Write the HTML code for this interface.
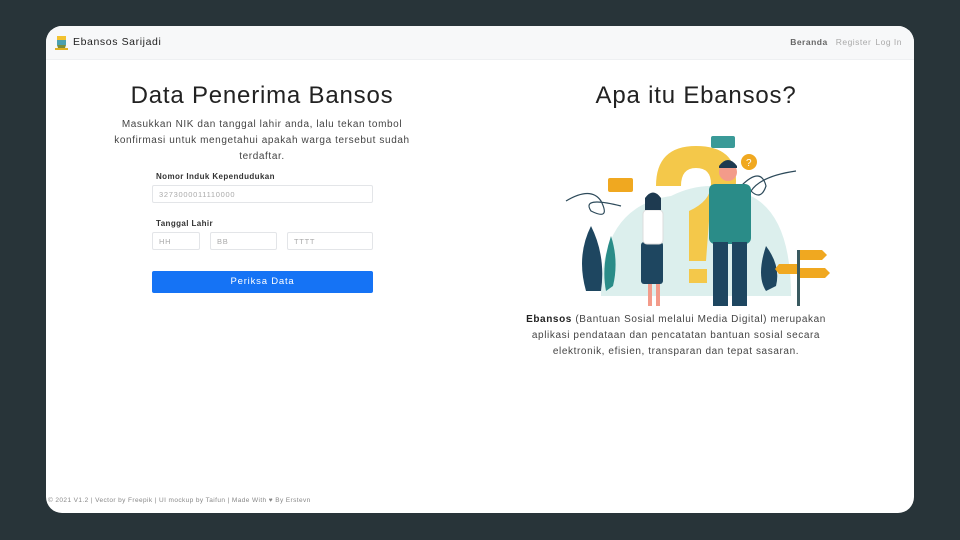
<!DOCTYPE html>
<html><head><meta charset="utf-8"><style>
*{margin:0;padding:0;box-sizing:border-box}
body{width:960px;height:540px;background:#283439;font-family:"Liberation Sans",sans-serif;position:relative;overflow:hidden}
.card{position:absolute;left:46px;top:26px;width:868px;height:487px;background:#fff;border-radius:16px;overflow:hidden}
.hdr{height:34px;background:#f7f8f9;border-bottom:1px solid #eef0f2;position:relative}
.brand{position:absolute;left:27px;top:10px;font-size:10.5px;color:#222;letter-spacing:.6px}
.logo{position:absolute;left:9px;top:9px;width:13px;height:16px}
.nav{position:absolute;right:12px;top:11px;font-size:8.5px;color:#aaa;letter-spacing:.5px}
.nav b{color:#666;font-weight:bold;margin-right:4px}
.nav span{margin-left:4px}
.t{position:absolute;text-align:center;color:#222}
h1{font-weight:normal;font-size:24px;letter-spacing:.8px}
.p{font-size:10px;color:#444;line-height:16px;letter-spacing:.6px}
.lbl{position:absolute;font-size:8px;color:#333;font-weight:bold;letter-spacing:.4px}
.in{position:absolute;border:1px solid #e3e5e8;border-radius:2px;height:18px;font-size:7.5px;color:#aaa;padding:4px 6px;letter-spacing:.7px}
.btn{position:absolute;left:106px;top:245px;width:221px;height:22px;background:#1573f5;border-radius:2px;color:#fff;font-size:9.5px;text-align:center;line-height:22px;letter-spacing:.8px}
.foot{position:absolute;left:2px;top:471px;font-size:6.5px;color:#888;letter-spacing:.4px}
</style></head><body>
<div class="card">
<div class="hdr">
<svg class="logo" viewBox="0 0 13 16"><rect x="2" y="1" width="9" height="4" fill="#f2c230"/><rect x="2" y="5" width="9" height="5" fill="#4aa0b0"/><path d="M2 10h9l-1 3H3z" fill="#7b8c3a"/><rect x="0" y="13" width="13" height="2" fill="#e0b020"/></svg>
<div class="brand">Ebansos Sarijadi</div>
<div class="nav"><b>Beranda</b><span>Register</span><span>Log In</span></div>
</div>
<div class="t" style="left:40px;width:352px;top:56px"><h1>Data Penerima Bansos</h1></div>
<div class="t p" style="left:56px;width:320px;top:91px">Masukkan NIK dan tanggal lahir anda, lalu tekan tombol konfirmasi untuk mengetahui apakah warga tersebut sudah terdaftar.</div>
<div class="lbl" style="left:110px;top:146px">Nomor Induk Kependudukan</div>
<div class="in" style="left:106px;top:159px;width:221px">3273000011110000</div>
<div class="lbl" style="left:110px;top:193px">Tanggal Lahir</div>
<div class="in" style="left:106px;top:206px;width:48px">HH</div>
<div class="in" style="left:164px;top:206px;width:67px">BB</div>
<div class="in" style="left:241px;top:206px;width:86px">TTTT</div>
<div class="btn">Periksa Data</div>
<div class="t" style="left:490px;width:320px;top:56px"><h1>Apa itu Ebansos?</h1></div>
<svg style="position:absolute;left:515px;top:100px" width="280" height="180" viewBox="0 0 280 180">
<path d="M40 170 Q40 80 110 70 Q150 50 190 70 Q230 90 230 170Z" fill="#dcefed"/>
<path d="M95 60 Q95 20 135 20 Q175 20 175 55 Q175 80 148 95 L145 135 H128 L128 85 Q150 75 150 58 Q150 42 135 42 Q120 42 120 60Z" fill="#f4c84a"/>
<rect x="128" y="143" width="18" height="14" fill="#f4c84a"/>
<path d="M5 75 Q30 60 40 75 Q50 95 30 85 Q20 70 60 80" stroke="#2d4a5a" fill="none" stroke-width="1.2"/>
<path d="M180 60 Q200 40 205 60 Q200 75 190 65 Q200 50 235 45" stroke="#2d4a5a" fill="none" stroke-width="1.2"/>
<rect x="47" y="52" width="25" height="14" rx="2" fill="#f0a820"/>
<rect x="150" y="10" width="24" height="12" rx="2" fill="#3a9a98"/>
<circle cx="188" cy="36" r="8" fill="#f0a820"/>
<text x="185" y="40" font-size="10" fill="#fff" font-family="Liberation Sans">?</text>
<path d="M30 100 Q15 130 25 165 L40 165 Q45 130 30 100Z" fill="#1e4660"/>
<path d="M50 110 Q40 140 45 165 L52 160 Q58 135 50 110Z" fill="#2a8c88"/>
<path d="M205 120 Q195 150 205 165 L215 160 Q220 140 205 120Z" fill="#1e4660"/>
<rect x="80" y="116" width="22" height="42" rx="3" fill="#1e4660"/>
<rect x="82" y="84" width="20" height="34" rx="4" fill="#fff" stroke="#ddd"/>
<circle cx="92" cy="76" r="7" fill="#f39b8a"/>
<path d="M84 72 Q92 61 100 72 L100 84 H84Z" fill="#1e3a50"/>
<rect x="87" y="158" width="4" height="40" fill="#f39b8a"/><rect x="95" y="158" width="4" height="40" fill="#f39b8a"/>
<rect x="148" y="58" width="42" height="60" rx="6" fill="#2a8c88"/>
<circle cx="167" cy="46" r="9" fill="#f39b8a"/>
<path d="M158 40 Q167 28 176 40 L176 42 H158Z" fill="#1e3a50"/>
<rect x="152" y="116" width="15" height="80" fill="#1e4660"/><rect x="171" y="116" width="15" height="80" fill="#1e4660"/>
<rect x="236" y="124" width="3" height="70" fill="#3a5a60"/>
<path d="M239 124h22l5 5-5 5h-22z" fill="#f0a820"/>
<path d="M236 138h-18l-4 5 4 5h18z" fill="#f0a820"/>
<path d="M239 142h25l5 5-5 5h-25z" fill="#f0a820"/>
</svg>
<div class="t p" style="left:460px;width:340px;top:286px"><b style="color:#222">Ebansos</b> (Bantuan Sosial melalui Media Digital) merupakan aplikasi pendataan dan pencatatan bantuan sosial secara elektronik, efisien, transparan dan tepat sasaran.</div>
<div class="foot">© 2021 V1.2 | Vector by Freepik | UI mockup by Taifun | Made With ♥ By Erstevn</div>
</div>
</body></html>
